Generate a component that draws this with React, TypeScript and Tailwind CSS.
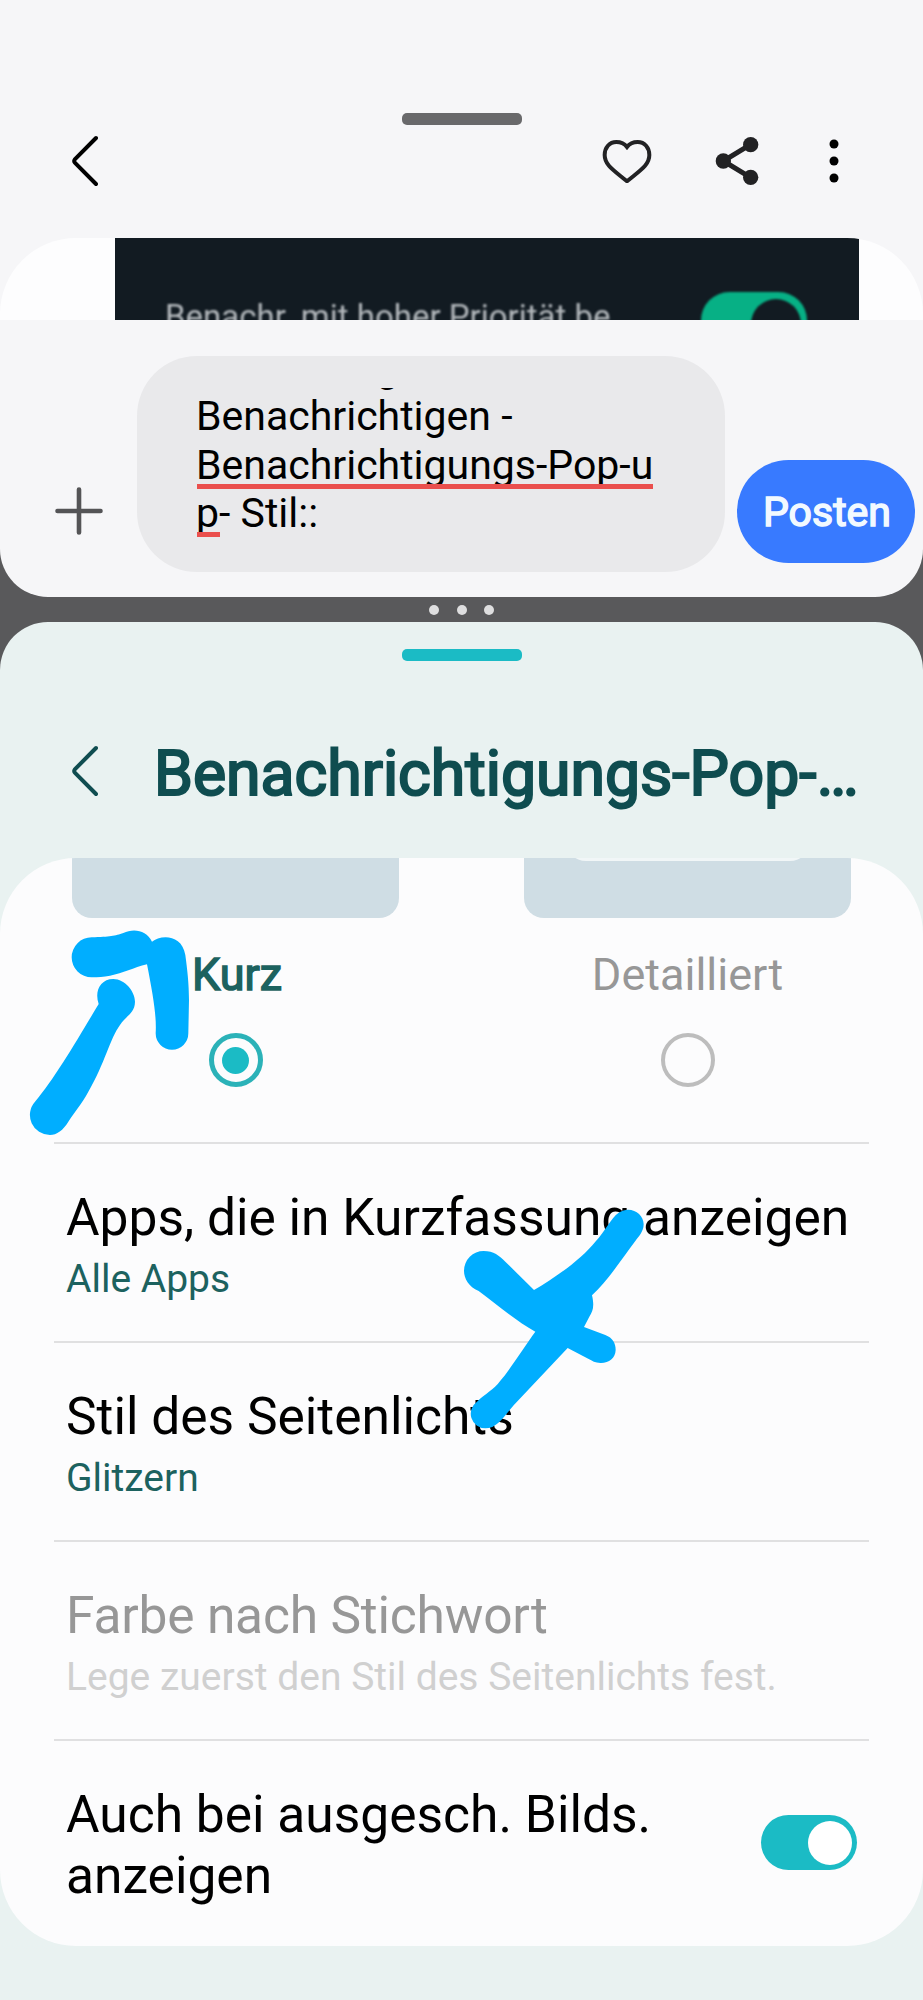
import type { ReactNode } from "react";

function BackIcon({ className }: { className: string }) {
  return (
    <svg className={className} width="26" height="52" viewBox="0 0 26 52" fill="none" stroke="currentColor" strokeWidth="4" strokeLinecap="round" strokeLinejoin="round">
      <path d="M24 3 L2.8 24.4 Q1.6 26 2.8 27.6 L24 49" />
    </svg>
  );
}

function HeartIcon() {
  return (
    <svg width="50" height="44" viewBox="0 0 150 132" fill="none" stroke="#222224" strokeWidth="12" strokeLinejoin="miter">
      <path d="M75 24 C66 12 55 9 43 9 C22 9 8 26 8 48 C8 78 34 93 75 127 C116 93 142 78 142 48 C142 26 128 9 107 9 C95 9 84 12 75 24 Z" />
    </svg>
  );
}

function ShareIcon() {
  return (
    <svg width="44" height="50" viewBox="0 0 132 150" fill="#222224" stroke="#222224">
      <path d="M106 26 L25 75 L106 124" fill="none" strokeWidth="15" />
      <circle cx="107" cy="26" r="23" strokeWidth="0" />
      <circle cx="25" cy="75" r="23" strokeWidth="0" />
      <circle cx="107" cy="124" r="23" strokeWidth="0" />
    </svg>
  );
}

function MoreIcon() {
  return (
    <svg width="10" height="44" viewBox="0 0 10 44" fill="#000">
      <circle cx="5" cy="5" r="4.5" />
      <circle cx="5" cy="22" r="4.5" />
      <circle cx="5" cy="39" r="4.5" />
    </svg>
  );
}

function Row({ title, sub, disabled = false }: { title: string; sub: string; disabled?: boolean }) {
  return (
    <div className="h-[199px] border-t-2 border-[#e0e0e1] pt-[44px] pl-[12px] whitespace-nowrap">
      <p className={`text-[51.5px] leading-[60.6px] ${disabled ? "tracking-[-0.2px] text-[#979797]" : "text-black"}`}>{title}</p>
      <p className={`text-[39px] leading-[61px] ${disabled ? "text-[#d0d0d0]" : "text-[#1c625f]"}`}>{sub}</p>
    </div>
  );
}

function Option({ label, children }: { label: ReactNode; children: ReactNode }) {
  return (
    <div className="flex w-[327px] flex-col items-center">
      {children}
      <div className="mt-[27px] text-[45px] leading-[60px]">{label}</div>
    </div>
  );
}

function Marker() {
  return (
    <svg className="pointer-events-none absolute top-0 left-0" width="923" height="2000" viewBox="0 0 923 2000" fill="#00aeff">
      <g transform="translate(0 700) scale(0.33333)">
        <path d="M275 712 C330 710 345 708 370 699 C400 684 440 690 456 725 C480 705 545 700 556 765 C562 810 567 850 567 900 L565 1000 A49 49 0 0 1 467 1000 C470 950 460 890 441 793 C400 803 370 820 330 827 C310 830 295 832 275 832 A60 60 0 0 1 275 712 Z" />
        <path d="M296 912 C283 875 300 837 340 837 C375 837 405 875 405 905 C404 940 380 945 360 975 C330 1015 315 1090 265 1175 C245 1212 225 1235 205 1265 C190 1290 170 1305 150 1305 A60 60 0 0 1 105 1205 C165 1135 240 1005 296 912 Z" />
      </g>
      <g transform="translate(462 1130) scale(0.33333)">
        <path d="M6 422 A59 59 0 0 1 65 363 C95 363 112 377 130 395 L216 480 C285 440 360 385 400 335 C430 303 447 264 470 248 C505 225 545 250 545 283 C545 305 530 320 520 333 C480 385 440 450 390 496 C398 530 392 545 382 560 L366 591 L430 615 C452 623 461 640 461 660 C460 685 440 700 415 699 C400 699 390 692 380 687 L317 654 L155 826 C125 860 105 895 70 895 A44 44 0 0 1 45 815 C70 790 95 780 115 752 C140 725 190 645 220 605 C165 575 100 520 50 483 C20 470 6 445 6 422 Z" />
      </g>
    </svg>
  );
}

export default function App() {
  return (
    <div className="relative flex h-[2000px] w-[923px] flex-col overflow-hidden bg-[#59595b] font-['Roboto',sans-serif]">
      <section className="flex h-[597px] flex-col overflow-hidden rounded-b-[48px] bg-[#f6f6f8]">
        <div className="flex h-[238px] flex-col items-center pt-[113px]">
          <div className="h-3 w-[120px] rounded-[5px] bg-[#69696b]" />
          <header className="mt-[10px] flex w-full items-center pr-[84px] pl-[72px]">
            <BackIcon className="text-black" />
            <div className="ml-auto flex items-center">
              <HeartIcon />
              <span className="ml-[63px]"><ShareIcon /></span>
              <span className="ml-[70px]"><MoreIcon /></span>
            </div>
          </header>
        </div>

        <div className="h-[82px] overflow-hidden rounded-t-[76px] bg-[#fdfdfe] pl-[115px]">
          <div className="flex h-[82px] w-[744px] items-start overflow-hidden bg-[#121b22] pl-[50px]">
            <p className="mt-[59px] w-[536px] text-[33px] leading-10 whitespace-nowrap text-[#b4b9bd] blur-[1px]">
              Benachr. mit hoher Priorität be
            </p>
            <div className="mt-[54px] flex h-[57px] w-[106px] shrink-0 items-center justify-end rounded-full bg-[#07b085] pr-[6px] blur-[1px]">
              <div className="mt-[7px] h-[50px] w-[50px] rounded-full bg-[#121b22]" />
            </div>
          </div>
        </div>

        <div className="flex flex-1 pl-[55px]">
          <svg className="mt-[167px] shrink-0" width="48" height="48" viewBox="0 0 48 48" stroke="#545456" strokeWidth="4.6" strokeLinecap="round">
            <path d="M24 2.5 V45.5 M2.5 24 H45.5" />
          </svg>
          <div className="mt-[36px] ml-[34px] h-[216px] w-[588px] shrink-0 rounded-[60px] bg-[#e9e9eb] pt-[32px] pl-[59px]">
            <div className="flex h-[150px] flex-col justify-end overflow-hidden text-[41px] leading-[48.7px] whitespace-nowrap text-black">
              <p className="-mb-px shrink-0 pl-[180px]">g</p>
              <p className="shrink-0">Benachrichtigen -</p>
              <p className="shrink-0">
                <span className="relative">
                  Benachrichtigungs-Pop-u
                  <span className="absolute bottom-0 left-[1px] h-[5px] w-[456px] bg-[#ea4f4d] shadow-[0_3px_0_#e9e9eb]" />
                </span>
              </p>
              <p className="shrink-0">
                <span className="relative">
                  p
                  <span className="absolute bottom-0 left-[1px] h-[5px] w-[23px] bg-[#ea4f4d] shadow-[0_3px_0_#e9e9eb]" />
                </span>
                - Stil::
              </p>
            </div>
          </div>
          <button className="mt-[140px] ml-[12px] h-[103px] w-[178px] shrink-0 rounded-full bg-[#387aff] pl-[2px] text-[41px] leading-[48px] text-[#f2f9ff] [-webkit-text-stroke:1.5px_#f2f9ff]">
            Posten
          </button>
        </div>
      </section>

      <div className="flex h-[25px] items-center justify-center gap-[17.5px]">
        <i className="h-[10px] w-[10px] rounded-full bg-[#dededf]" />
        <i className="h-[10px] w-[10px] rounded-full bg-[#dededf]" />
        <i className="h-[10px] w-[10px] rounded-full bg-[#dededf]" />
      </div>

      <section className="flex flex-1 flex-col rounded-t-[48px] bg-[#e9f2f1]">
        <div className="flex h-[236px] flex-col items-center pt-[27px]">
          <div className="h-3 w-[120px] rounded-[5px] bg-[#1bbbc5]" />
          <header className="mt-[77px] flex w-full items-start pl-[72px] text-[#0f4d50]">
            <BackIcon className="mt-[7px] shrink-0" />
            <h1 className="ml-[56px] text-[62.5px] leading-[72px] whitespace-nowrap [-webkit-text-stroke:2.2px_#0f4d50]">
              Benachrichtigungs-Pop-…
            </h1>
          </header>
        </div>

        <div className="h-[1088px] overflow-hidden rounded-[76px] bg-[#fcfcfd]">
          <div className="flex h-[284px] gap-[125px] pl-[72px]">
            <Option label={<span className="pl-[3px] text-[#1c625f] [-webkit-text-stroke:1.5px_#1c625f]">Kurz</span>}>
              <div className="h-[60px] w-full rounded-b-[20px] bg-[#cfdde4]" />
              <div className="order-last mt-[28px] flex h-[54px] w-[54px] items-center justify-center rounded-full border-[5.5px] border-[#2bb2b8]">
                <div className="h-[27px] w-[27px] rounded-full bg-[#1bbbc5]" />
              </div>
            </Option>
            <Option label={<span className="text-[#979797]">Detailliert</span>}>
              <div className="flex h-[60px] w-full justify-center overflow-hidden rounded-b-[20px] bg-[#cfdde4]">
                <div className="mt-[-37px] h-10 w-[244px] rounded-[24px] bg-[#f1f6f7]" />
              </div>
              <div className="order-last mt-[28px] h-[54px] w-[54px] rounded-full border-4 border-[#bdbdbd]" />
            </Option>
          </div>

          <div className="mr-[54px] ml-[54px]">
            <Row title="Apps, die in Kurzfassung anzeigen" sub="Alle Apps" />
            <Row title="Stil des Seitenlichts" sub="Glitzern" />
            <Row title="Farbe nach Stichwort" sub="Lege zuerst den Stil des Seitenlichts fest." disabled />
            <div className="flex items-start justify-between border-t-2 border-[#e0e0e1] pt-[44px] pr-[12px] pl-[12px]">
              <p className="text-[51.5px] leading-[60.6px] text-black">
                Auch bei ausgesch. Bilds.
                <br />
                anzeigen
              </p>
              <div className="mt-[30px] flex h-[55px] w-24 items-center justify-end rounded-full bg-[#1bbbc5] pr-[5.5px]">
                <div className="h-11 w-11 rounded-full bg-white" />
              </div>
            </div>
          </div>
        </div>
      </section>

      <Marker />
    </div>
  );
}
